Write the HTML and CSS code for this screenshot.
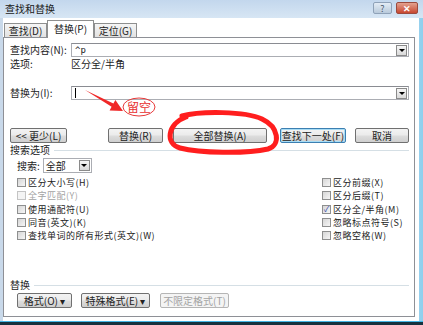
FILE: index.html
```html
<!DOCTYPE html>
<html lang="zh-CN">
<head>
  <meta charset="UTF-8" />
  <title>查找和替换</title>
  <link rel="stylesheet" href="styles.css">
</head>
<body>
  <div class="window">
    <div class="titlebar">
      <span class="title">查找和替换</span>
      <div class="caption-btns">
        <span class="cap help">?</span>
        <span class="cap close">✕</span>
      </div>
    </div>
    <div class="client">
      <div class="tabs">
        <span class="tab">查找(D)</span>
        <span class="tab active">替换(P)</span>
        <span class="tab">定位(G)</span>
      </div>
      <div class="panel">
        <div class="field-row">
          <span class="field-label">查找内容(N):</span>
          <div class="combo"><span class="val">^p</span><span class="drop"></span></div>
        </div>
        <div class="opt-row">
          <span class="field-label">选项:</span>
          <span>区分全/半角</span>
        </div>
        <div class="field-row replace-row">
          <span class="field-label">替换为(I):</span>
          <div class="combo"><span class="caret"></span><span class="drop"></span></div>
        </div>
        <div class="btn-row">
          <span class="btn less">&lt;&lt; 更少(L)</span>
          <span class="btn replace">替换(R)</span>
          <span class="btn replace-all">全部替换(A)</span>
          <span class="btn find-next">查找下一处(F)</span>
          <span class="btn cancel">取消</span>
        </div>
        <div class="group-head">搜索选项</div>
        <div class="search-row">
          <span>搜索:</span>
          <div class="select"><span>全部</span><span class="drop"></span></div>
        </div>
        <div class="checks">
          <div class="check-col left">
            <div class="check"><span class="box"></span>区分大小写(H)</div>
            <div class="check disabled"><span class="box"></span>全字匹配(Y)</div>
            <div class="check"><span class="box"></span>使用通配符(U)</div>
            <div class="check"><span class="box"></span>同音(英文)(K)</div>
            <div class="check"><span class="box"></span>查找单词的所有形式(英文)(W)</div>
          </div>
          <div class="check-col">
            <div class="check"><span class="box"></span>区分前缀(X)</div>
            <div class="check"><span class="box"></span>区分后缀(T)</div>
            <div class="check"><span class="box checked">✓</span>区分全/半角(M)</div>
            <div class="check"><span class="box"></span>忽略标点符号(S)</div>
            <div class="check"><span class="box"></span>忽略空格(W)</div>
          </div>
        </div>
        <div class="group-head replace-head">替换</div>
        <div class="btn-row bottom">
          <span class="btn fmt">格式(O) ▾</span>
          <span class="btn special">特殊格式(E) ▾</span>
          <span class="btn no-fmt">不限定格式(T)</span>
        </div>
      </div>
    </div>
    <div class="taskbar"></div>

    <svg class="marks" width="423" height="325" viewBox="0 0 423 325">
      <polygon points="85,90 113.4,103.6 115.4,99.9 123,111 109.6,110.5 111.6,106.8" fill="#f02828"/>
      <ellipse cx="139" cy="107" rx="16" ry="9" fill="none" stroke="#e83a3a" stroke-width="1"/>
      <text x="139" y="111.5" text-anchor="middle" class="note">留空</text>
      <path d="M182,116 C200,111 245,111 262,119 C279,127 281,145 268,149 C245,154 200,153 180,148 C165,144 167,124 186,117" fill="none" stroke="#ff1e1e" stroke-width="5" stroke-linecap="round"/>
    </svg>
  </div>
</body>
</html>
```

FILE: styles.css
```css
* {
  box-sizing: border-box;
}
body {
  margin: 0;
  font-family: "Noto Sans CJK SC", "Liberation Sans", sans-serif;
  font-size: 10px;
  line-height: 12px;
  color: #222;
}
.window {
  width: 423px;
  height: 325px;
  background: linear-gradient(90deg, #c9d9ea, #bcd6ee 95%, #8fd0ee);
  display: flex;
  flex-direction: column;
  position: relative;
  overflow: hidden;
}
.titlebar {
  height: 18px;
  display: flex;
  align-items: center;
  justify-content: space-between;
  padding: 0 5px 0 5px;
  background: linear-gradient(#c3d7ed, #d7e6f4);
}
.title {
  color: #1a1a1a;
}
.caption-btns {
  display: flex;
  gap: 4px;
  align-self: flex-start;
  margin-top: 2px;
}
.cap {
  height: 12px;
  border-radius: 2px;
  display: flex;
  align-items: center;
  justify-content: center;
  font-size: 9px;
  line-height: 1;
}
.help {
  width: 19px;
  border: 1px solid #8fa2b8;
  background: linear-gradient(#e3ecf5, #b9cadb);
  color: #4a5a6c;
}
.close {
  width: 22px;
  border: 1px solid #9b4a3e;
  background: linear-gradient(#e3a18f, #c8472f);
  color: #fff;
  font-weight: bold;
}
.client {
  flex: 1;
  margin: 0 4px 0 3px;
  background: #fff;
  display: flex;
  flex-direction: column;
}
.tabs {
  height: 19px;
  display: flex;
  align-items: flex-end;
  padding-left: 1px;
  position: relative;
  z-index: 1;
}
.tab {
  height: 14px;
  width: 43px;
  border: 1px solid #8e8f8f;
  border-bottom: none;
  background: linear-gradient(#f5f5f5, #e2e2e2);
  display: flex;
  align-items: center;
  justify-content: center;
}
.tab.active {
  height: 18px;
  width: 47px;
  margin-bottom: -1px;
  background: #fff;
  padding-bottom: 2px;
}
.panel {
  flex: 1;
  margin: 0 4px 4px 0;
  border: 1px solid #8e9096;
  padding: 0 5px 0 6px;
  display: flex;
  flex-direction: column;
}
.field-row {
  display: flex;
  align-items: center;
  height: 14px;
  margin-top: 5px;
}
.field-label {
  width: 61px;
  flex: none;
}
.combo {
  flex: 1;
  height: 14px;
  border: 1px solid #abadb3;
  border-top-color: #8a8c92;
  background: #fff;
  display: flex;
  align-items: center;
  justify-content: space-between;
  padding-left: 3px;
}
.val {
  font-family: "DejaVu Sans Mono", monospace;
  font-size: 9px;
}
.caret {
  width: 1px;
  height: 10px;
  background: #000;
}
.drop {
  width: 11px;
  height: 11px;
  margin-right: 1px;
  border: 1px solid #8a8a8a;
  background: linear-gradient(#f6f6f6, #d9d9d9);
  display: flex;
  align-items: center;
  justify-content: center;
}
.drop::after {
  content: "";
  border-left: 3px solid transparent;
  border-right: 3px solid transparent;
  border-top: 3px solid #000;
}
.opt-row {
  display: flex;
  align-items: center;
  height: 12px;
  margin-top: 1px;
}
.replace-row {
  margin-top: 16px;
}
.btn-row {
  display: flex;
  margin-top: 28px;
}
.btn {
  height: 15px;
  border: 1px solid #707070;
  border-radius: 2px;
  background: linear-gradient(#f3f3f3 0%, #ebebeb 48%, #dddddd 52%, #cfcfcf 100%);
  display: flex;
  align-items: center;
  justify-content: center;
  white-space: nowrap;
}
.less {
  width: 57px;
}
.replace {
  width: 55px;
  margin-left: 41px;
}
.replace-all {
  width: 94px;
  margin-left: 10px;
}
.find-next {
  width: 66px;
  margin-left: 13px;
  border-color: #3c7fb1;
  box-shadow: inset 0 0 0 1px #a7dcf5;
}
.cancel {
  width: 54px;
  margin-left: 9px;
}
.group-head {
  display: flex;
  align-items: center;
  gap: 4px;
  height: 12px;
  margin-top: 1px;
}
.group-head::after {
  content: "";
  flex: 1;
  height: 1px;
  background: #d5dfe5;
}
.search-row {
  display: flex;
  align-items: center;
  gap: 3px;
  margin-top: 2px;
  padding-left: 7px;
}
.select {
  width: 49px;
  height: 15px;
  border: 1px solid #abadb3;
  background: #fff;
  display: flex;
  align-items: center;
  justify-content: space-between;
  padding-left: 2px;
}
.checks {
  display: flex;
  margin-top: 3px;
  padding-left: 7px;
}
.check-col.left {
  width: 305px;
}
.check {
  height: 13.25px;
  display: flex;
  align-items: center;
  gap: 2px;
  white-space: nowrap;
  font-size: 9px;
  line-height: 11px;
  letter-spacing: 0.5px;
}
.check.disabled {
  color: #a3a3a3;
}
.box {
  width: 9px;
  height: 9px;
  border: 1px solid #8e8f8f;
  background: linear-gradient(135deg, #d6d6d6, #f6f6f6);
  display: flex;
  align-items: center;
  justify-content: center;
  font-size: 8px;
  line-height: 1;
  letter-spacing: 0;
  color: #2f46a8;
}
.disabled .box {
  border-color: #c4c4c4;
  background: #f4f4f4;
}
.replace-head {
  margin-top: 37px;
}
.btn-row.bottom {
  margin-top: 2px;
  padding-left: 7px;
}
.fmt {
  width: 55px;
}
.special {
  width: 69px;
  margin-left: 9px;
}
.no-fmt {
  width: 69px;
  margin-left: 10px;
  border-color: #b5b5b5;
  background: #f4f4f4;
  color: #a3a3a3;
}
.taskbar {
  height: 4px;
  border-top: 1px solid #45b6e6;
  background: #17313e;
}
.marks {
  position: absolute;
  top: 0;
  left: 0;
  pointer-events: none;
}
.note {
  fill: #e83030;
  font-size: 12px;
}
```
